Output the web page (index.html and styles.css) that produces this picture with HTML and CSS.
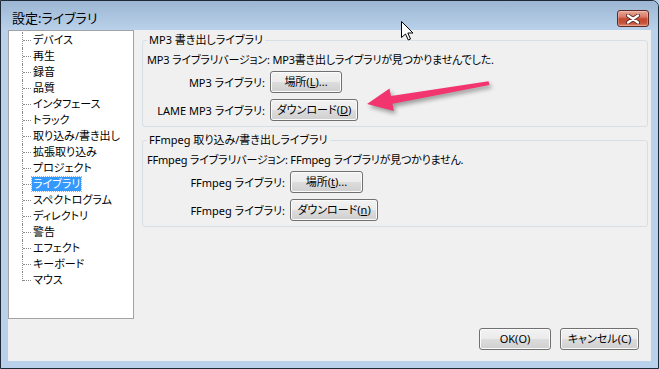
FILE: index.html
```html
<!DOCTYPE html>
<html lang="ja">
<head>
    <meta charset="UTF-8">
    <meta name="viewport" content="width=device-width, initial-scale=1.0">
    <title>設定:ライブラリ</title>
    <link rel="stylesheet" href="styles.css">
</head>
<body>
    <div class="window">
        <!-- Title bar -->
        <div class="titlebar">
            <span class="title">設定:ライブラリ</span>
            <button class="close-btn" aria-label="閉じる">
                <svg width="14" height="10" viewBox="0 0 14 10">
                    <path d="M2,1.5 L12,8.5 M12,1.5 L2,8.5" stroke="#5b2a24" stroke-width="4" stroke-linecap="round" fill="none"/>
                    <path d="M2,1.5 L12,8.5 M12,1.5 L2,8.5" stroke="#ffffff" stroke-width="2.2" stroke-linecap="round" fill="none"/>
                </svg>
            </button>
        </div>

        <div class="client">
            <div class="main">
                <!-- Category tree -->
                <ul class="tree">
                    <li>デバイス</li>
                    <li>再生</li>
                    <li>録音</li>
                    <li>品質</li>
                    <li>インタフェース</li>
                    <li>トラック</li>
                    <li>取り込み/書き出し</li>
                    <li>拡張取り込み</li>
                    <li>プロジェクト</li>
                    <li><span class="selected">ライブラリ</span></li>
                    <li>スペクトログラム</li>
                    <li>ディレクトリ</li>
                    <li>警告</li>
                    <li>エフェクト</li>
                    <li>キーボード</li>
                    <li>マウス</li>
                </ul>

                <!-- Library settings -->
                <div class="panel">
                    <fieldset class="group">
                        <legend>MP3 書き出しライブラリ</legend>
                        <div class="info">MP3 ライブラリバージョン: MP3書き出しライブラリが見つかりませんでした.</div>
                        <div class="row">
                            <span class="label">MP3 ライブラリ:</span>
                            <button class="btn btn-locate">場所(<u>L</u>)...</button>
                        </div>
                        <div class="row row-second">
                            <span class="label">LAME MP3 ライブラリ:</span>
                            <button class="btn btn-download">ダウンロード(<u>D</u>)</button>
                        </div>
                    </fieldset>

                    <fieldset class="group group-ffmpeg">
                        <legend>FFmpeg 取り込み/書き出しライブラリ</legend>
                        <div class="info">FFmpeg ライブラリバージョン: FFmpeg ライブラリが見つかりません.</div>
                        <div class="row">
                            <span class="label">FFmpeg ライブラリ:</span>
                            <button class="btn btn-locate">場所(<u>t</u>)...</button>
                        </div>
                        <div class="row row-second">
                            <span class="label">FFmpeg ライブラリ:</span>
                            <button class="btn btn-download">ダウンロード(<u>n</u>)</button>
                        </div>
                    </fieldset>
                </div>
            </div>

            <div class="footer">
                <button class="btn btn-ok">OK(O)</button>
                <button class="btn btn-cancel">キャンセル(C)</button>
            </div>
        </div>
    </div>

    <!-- Annotation arrow and mouse pointer drawn over the dialog -->
    <svg class="overlay" width="659" height="369" viewBox="0 0 659 369">
        <polygon class="pink-arrow" points="367,104 389.5,88.5 391,96 488.5,81.2 489.6,85 392.4,103.8 394,111"/>
        <path transform="translate(401.5,21.5)" d="M0,0 V16 L4,12.5 L6.8,18.5 L9,17.5 L6.3,11.5 H11.5 Z" fill="#ffffff" stroke="#000000" stroke-width="1" stroke-linejoin="miter"/>
    </svg>
</body>
</html>
```

FILE: styles.css
```css
body {
    margin: 0;
    width: 659px;
    height: 369px;
    position: relative;
    overflow: hidden;
    background-color: #b9d1ea;
    font-family: "Noto Sans", "Noto Sans CJK JP", sans-serif;
    font-size: 11px;
    font-feature-settings: "palt";
    color: #000;
}
.window {
    box-sizing: border-box;
    width: 659px;
    height: 369px;
    border: 1px solid #1e2a38;
    border-top-right-radius: 7px;
    background-color: #b9d1ea;
    display: flex;
    flex-direction: column;
}
.titlebar {
    height: 29px;
    flex: none;
    display: flex;
    justify-content: space-between;
    align-items: flex-start;
    padding: 0 9px 0 11px;
    background: linear-gradient(#9cb6d3, #b9d1ea);
    border-top-right-radius: 6px;
}
.title {
    font-size: 13px;
    line-height: 18px;
    margin-top: 8px;
    color: #000;
}
.close-btn {
    margin-top: 9px;
    width: 32px;
    height: 17px;
    padding: 0;
    border: 1px solid #5e2a23;
    border-radius: 3px;
    background: linear-gradient(#e8a898 0%, #d87a66 40%, #c44a30 52%, #c5523a 80%, #de8a70 100%);
    box-shadow: inset 0 0 0 1px rgba(255, 255, 255, 0.25);
    display: flex;
    align-items: center;
    justify-content: center;
}
.close-btn svg {
    display: block;
}
.client {
    flex: 1;
    margin: 0 7px 7px 7px;
    background-color: #f0f0f0;
    display: flex;
    flex-direction: column;
}
.main {
    height: 289px;
    display: flex;
}
.tree {
    box-sizing: border-box;
    width: 126px;
    height: 289px;
    margin: 0;
    padding: 1px 0 0 13px;
    list-style: none;
    background-color: #fff;
    border: 1px solid #a3a3a3;
}
.tree li {
    position: relative;
    height: 16px;
    line-height: 16px;
    padding-left: 11px;
    white-space: nowrap;
}
.tree li::before {
    content: "";
    position: absolute;
    left: 1px;
    top: 8px;
    width: 8px;
    border-top: 1px dotted #8a8a8a;
}
.tree li::after {
    content: "";
    position: absolute;
    left: 0;
    top: 0;
    bottom: 0;
    border-left: 1px dotted #8a8a8a;
}
.tree li:last-child::after {
    bottom: 7px;
}
.selected {
    display: inline-block;
    line-height: 14px;
    padding: 0 1px;
    margin-left: -1px;
    background-color: #3399ff;
    color: #fff;
    outline: 1px dotted #f0a050;
}
.panel {
    flex: 1;
    margin: 0 3px 0 8px;
    padding-top: 2px;
}
.group {
    margin: 0;
    padding: 4px 4px 5px 4px;
    border: 1px solid #d5dfe5;
    border-radius: 3px;
    min-width: 0;
}
.group legend {
    padding: 0 2px;
    line-height: 16px;
}
.group-ffmpeg {
    margin-top: 5px;
}
.info {
    line-height: 16px;
    white-space: nowrap;
    letter-spacing: -0.2px;
}
.row {
    display: flex;
    align-items: center;
    margin-top: 3px;
}
.row-second {
    margin-top: 6px;
}
.label {
    width: 118px;
    margin-right: 5px;
    text-align: right;
    white-space: nowrap;
}
.group-ffmpeg .label {
    width: 138px;
}
.btn {
    box-sizing: border-box;
    height: 22px;
    padding: 0;
    border: 1px solid #707070;
    border-radius: 3px;
    background: linear-gradient(#f2f2f2 0%, #ebebeb 50%, #dddddd 50%, #cfcfcf 100%);
    box-shadow: inset 0 0 0 1px #fbfbfb;
    font-family: inherit;
    font-size: 11px;
    font-feature-settings: "palt";
    color: #000;
    line-height: 18px;
    text-align: center;
    white-space: nowrap;
}
.btn-locate {
    width: 72px;
}
.group-ffmpeg .btn-locate {
    width: 73px;
}
.btn-download {
    width: 88px;
}
.footer {
    display: flex;
    justify-content: flex-end;
    gap: 9px;
    padding: 9px 12px 11px 0;
}
.btn-ok {
    width: 72px;
}
.btn-cancel {
    width: 79px;
}
.overlay {
    position: absolute;
    left: 0;
    top: 0;
    pointer-events: none;
}
.pink-arrow {
    fill: #f2346f;
    filter: drop-shadow(2px 3px 2px rgba(0, 0, 0, 0.35));
}
```
